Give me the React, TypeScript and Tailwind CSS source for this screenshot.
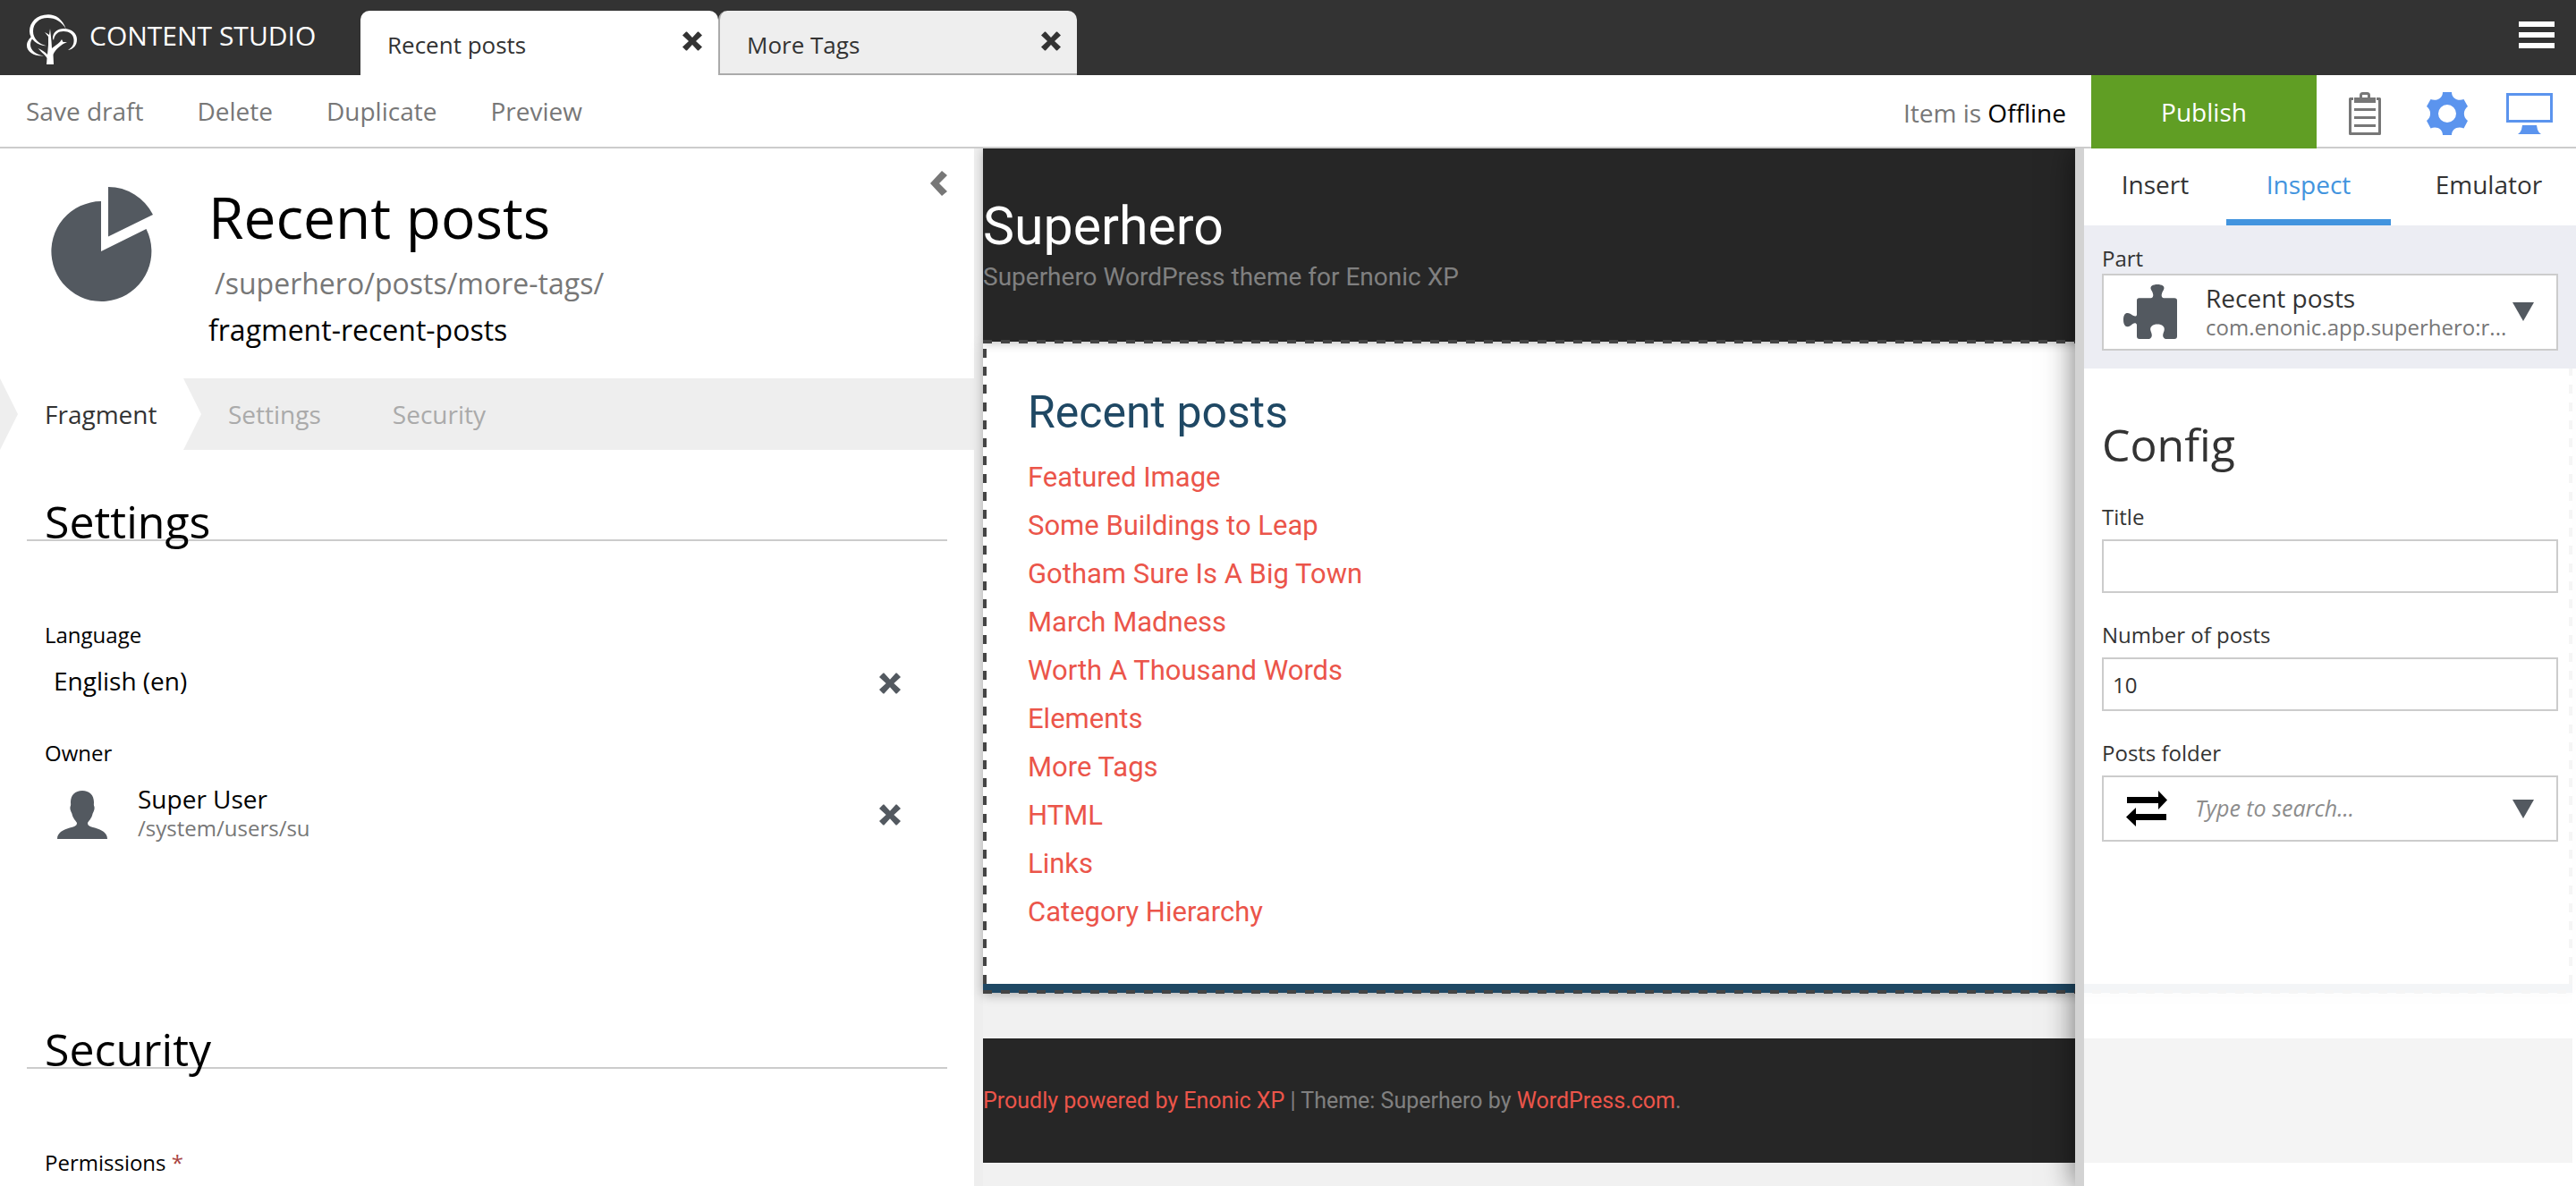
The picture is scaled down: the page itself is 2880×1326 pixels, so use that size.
import { useState, type ReactNode } from "react";

const POSTS = [
  "Featured Image",
  "Some Buildings to Leap",
  "Gotham Sure Is A Big Town",
  "March Madness",
  "Worth A Thousand Words",
  "Elements",
  "More Tags",
  "HTML",
  "Links",
  "Category Hierarchy",
];

function Logo() {
  return (
    <svg viewBox="0 0 56 56" className="h-14 w-14 shrink-0" fill="currentColor" aria-hidden="true">
      <path d="M44 17C40 5 32 .3 24 .3C11 .3 3 9 3 19c0 9 9 16 19 16.300C13 33 7 27 7 19C7 10 14 4 23 4c9 0 16 4 21 13z" />
      <path d="M29 27c0-7 5-11 12.500-11C50 16 56 21 56 28c0 7-4 11-10 12c5-3 7-7 6.500-12C52 22 47 19 41 19s-10 3-11 10z" />
      <path d="M5 25C1 29 0 32 0 35c0 7 8 12 19 11.500C10 45 4 40 4 34c0-3 1-6 3-7z" />
      <path d="M22 56l.5-7C21 46 17 43 12.500 38c4.500 2 8 4 10.500 7l1-11v-9l-4-5c2 1 3.500 2 5 3l1-7l1.500 14l.5 8c5-4 9-6 11-10l1.500 3H45c-7 3-13 8-15.500 14L30 56z" />
    </svg>
  );
}

function Cross({ className }: { className: string }) {
  return (
    <svg viewBox="0 0 22 22" className={className} fill="currentColor" aria-hidden="true">
      <path d="M4 0.500L5 .5L11 7L17 .5L18 .5L22 4.500L15 11L22 17.500L18 21.500L17 21.500L11 15L5 21.500L4 21.500L0 17.500L7 11L0 4.500z" />
    </svg>
  );
}

function PieIcon() {
  return (
    <svg viewBox="0 0 114 128" className="mt-[18px] h-32 w-[114px] shrink-0 text-[#535960]" fill="currentColor" aria-hidden="true">
      <path d="M56 16A56 56 0 1 0 106.500 47L56 72z" />
      <path d="M64 0V55.500L114 31A56 56 0 0 0 64 0z" />
    </svg>
  );
}

function ClipboardIcon() {
  return (
    <svg viewBox="0 0 36 48" className="h-12 w-9" aria-hidden="true">
      <path d="M5 7.500H1.500V46.500H34.500V7.500H31" fill="none" stroke="#777" strokeWidth="3" strokeLinejoin="round" />
      <path d="M13.500 7V3.500Q13.500 1.500 15.500 1.500H20.500Q22.500 1.500 22.500 3.500V7" fill="none" stroke="#777" strokeWidth="3" />
      <path d="M6 6H30V12H6zM6 18H30V21H6zM6 27H30V30H6zM6 36H30V39H6z" fill="#777" />
    </svg>
  );
}

function GearIcon() {
  return (
    <svg viewBox="0 0 46 48" className="h-12 w-[46px]" fill="#5b94ee" aria-hidden="true">
      <path
        fillRule="evenodd"
        d="M18 0H28C28 7 35 10.500 41.500 8L46 16C40.500 20 40.500 28 46 32L41.500 40.500C35 37.500 28 41 28 48H18C18 41 11 37.500 4.500 40.500L0 32C5.500 28 5.500 20 0 16L4.500 8C11 10.500 18 7 18 0zM23 14A10 10 0 1 0 23 34A10 10 0 1 0 23 14z"
      />
    </svg>
  );
}

function MonitorIcon() {
  return (
    <svg viewBox="0 0 52 46" className="h-[46px] w-[52px]" fill="#5b94ee" aria-hidden="true">
      <path fillRule="evenodd" d="M0 0H52V33H0zM3 3V30H49V3z" />
      <path d="M18 36H34L35 41Q36 44 39 46H13Q16 44 17 41z" />
    </svg>
  );
}

function PuzzleIcon() {
  return (
    <svg viewBox="0 0 60 61" className="h-[61px] w-[60px] shrink-0" fill="#535960" aria-hidden="true">
      <path d="M17.500 15.300H31C35 14 33 9 31 6C29 2 33 0 38 0C43 0 47 2 45 6C43 9 41 14 45 15.300H57Q60 15.300 60 18V58Q60 61 57 61H47C43 59 44 56 45.500 52C47 47 43 44.500 38 44.500C33 44.500 29 47 30.500 52C32 56 33 59 29 61H18Q15 61 15 58V45C14 42 11 43 8 46C3 49 0 46 0 39.500C0 33 3 30.500 8 33C11 35 14 37 15 34V18Q15 15.300 17.500 15.300z" />
    </svg>
  );
}

function UserIcon() {
  return (
    <svg viewBox="0 0 56 54" className="mt-1.5 h-[54px] w-14 shrink-0" fill="#535960" aria-hidden="true">
      <path d="M28 0C36 0 41 5 41 13C41 15 40.500 16 41.500 18C42 22 40 24 39.500 26C38.500 31 35 34 34 36C34 39 36 40 42 41.500C50 44 56 47 56 54H0C0 47 6 44 14 41.500C20 40 22 39 22 36C21 34 17.500 31 16.500 26C16 24 14 22 14.500 18C15.500 16 15 15 15 13C15 5 20 0 28 0z" />
    </svg>
  );
}

function SwapIcon() {
  return (
    <svg viewBox="0 0 46 40" className="h-10 w-[46px] shrink-0" fill="#000" aria-hidden="true">
      <path d="M1 7H36V0L46 10.500L36 21V14H1zM45 26H11V19L0 29.500L11 40V33H45z" />
    </svg>
  );
}

function DownArrow() {
  return (
    <svg viewBox="0 0 24 21" className="h-[21px] w-6 shrink-0" fill="#535960" aria-hidden="true">
      <path d="M0 0H24L12 21z" />
    </svg>
  );
}

function SectionTitle({ children, className }: { children: ReactNode; className: string }) {
  return (
    <h2 className={"mx-[30px] border-b-2 border-[#ccc] pl-5 text-[50px] leading-10 " + className}>
      {children}
    </h2>
  );
}

function RemoveButton({ label }: { label: string }) {
  return (
    <button type="button" aria-label={label} className="mt-1.5 ml-auto mr-[82px] text-[#535960]">
      <Cross className="h-6 w-6" />
    </button>
  );
}

function Header() {
  return (
    <header className="flex h-[84px] bg-[#333] text-white">
      <a href="#home" className="flex w-[403px] shrink-0 items-center gap-3.5 pl-[30px]">
        <span className="pt-1">
          <Logo />
        </span>
        <span className="pb-1 text-[30px] leading-10 whitespace-nowrap">CONTENT STUDIO</span>
      </a>
      <nav className="flex items-end text-[26px] text-[#333]">
        <div className="flex h-[72px] w-[400px] items-center justify-between rounded-t-[10px] bg-white pr-[18px] pl-[30px]">
          <a href="#recent-posts" className="pt-1">Recent posts</a>
          <button type="button" aria-label="Close Recent posts" className="pb-1">
            <Cross className="h-[22px] w-[22px]" />
          </button>
        </div>
        <div className="flex h-[72px] w-[401px] items-center justify-between rounded-t-[10px] border-b-2 border-l-2 border-[#aaa] bg-[#eee] pr-[18px] pl-[30px]">
          <a href="#more-tags" className="pt-1.5">More Tags</a>
          <button type="button" aria-label="Close More Tags" className="pb-0.5">
            <Cross className="h-[22px] w-[22px]" />
          </button>
        </div>
      </nav>
      <button type="button" aria-label="Menu" className="mr-6 mb-1.5 ml-auto flex flex-col justify-center gap-1.5">
        <span className="h-1.5 w-10 bg-white" />
        <span className="h-1.5 w-10 bg-white" />
        <span className="h-1.5 w-10 bg-white" />
      </button>
    </header>
  );
}

function Toolbar() {
  return (
    <div className="flex h-[82px] border-b-2 border-[#ccc] text-[28px] text-[#777]">
      <div className="flex items-center gap-[60px] pl-[29px]">
        <button type="button">Save draft</button>
        <button type="button">Delete</button>
        <button type="button">Duplicate</button>
        <button type="button">Preview</button>
      </div>
      <p className="mr-7 ml-auto self-center pt-1">
        Item is <span className="text-black">Offline</span>
      </p>
      <button type="button" className="-mb-0.5 w-[252px] bg-[#609e24] text-white">
        Publish
      </button>
      <div className="flex pt-1.5 pr-1.5 pl-2">
        <button type="button" aria-label="Show tasks" className="flex w-[92px] items-center justify-center">
          <ClipboardIcon />
        </button>
        <button type="button" aria-label="Show inspection panel" className="flex w-[92px] items-center justify-center">
          <GearIcon />
        </button>
        <button type="button" aria-label="Show page editor" className="flex w-[92px] items-center justify-center">
          <MonitorIcon />
        </button>
      </div>
    </div>
  );
}

function FormPanel() {
  const [title, setTitle] = useState("Recent posts");
  const [name, setName] = useState("fragment-recent-posts");
  return (
    <section className="w-[37.8125%] shrink-0 bg-white text-black">
      <div className="flex pt-[25px] pr-[30px] pb-[30px] pl-[57px]">
        <PieIcon />
        <div className="mt-3 ml-[62px] min-w-0 flex-1">
          <input
            aria-label="Display name"
            value={title}
            onChange={(e) => setTitle(e.target.value)}
            className="block h-20 w-full text-[64px] leading-[80px] outline-none"
          />
          <p className="mt-2.5 pl-[7px] text-[32px] leading-[48px] text-[#777]">/superhero/posts/more-tags/</p>
          <input
            aria-label="Name"
            value={name}
            onChange={(e) => setName(e.target.value)}
            className="mt-1 block h-12 w-full text-[32px] leading-[48px] outline-none"
          />
        </div>
        <button type="button" aria-label="Collapse panel" className="self-start text-[#777]">
          <svg viewBox="0 0 19 28" className="h-7 w-[19px]" fill="currentColor" aria-hidden="true">
            <path d="M13 0L19 5L10 14L19 23L13 28L0 14z" />
          </svg>
        </button>
      </div>

      <nav className="flex h-20 bg-[#eee] text-[28px] text-[#aaa]">
        <a
          href="#fragment"
          className="flex w-[225px] items-center bg-white pl-[50px] text-[#333] [clip-path:polygon(0_0,205px_0,100%_50%,205px_100%,0_100%,20px_50%)]"
        >
          Fragment
        </a>
        <a href="#settings" className="ml-[30px] flex items-center">Settings</a>
        <a href="#security" className="ml-20 flex items-center">Security</a>
      </nav>

      <SectionTitle className="mt-[60px]">Settings</SectionTitle>
      <h3 className="mt-[89px] pl-[50px] text-2xl leading-8">Language</h3>
      <div className="mt-[19px] flex h-8 items-center pl-[60px]">
        <span className="text-[28px] leading-10">English (en)</span>
        <RemoveButton label="Remove language" />
      </div>
      <h3 className="mt-[49px] pl-[50px] text-2xl leading-8">Owner</h3>
      <div className="mt-[17px] flex items-center pl-16">
        <UserIcon />
        <div className="ml-[34px]">
          <p className="text-[28px] leading-9">Super User</p>
          <p className="text-2xl leading-[30px] text-[#777]">/system/users/su</p>
        </div>
        <RemoveButton label="Remove owner" />
      </div>

      <SectionTitle className="mt-[212px]">Security</SectionTitle>
      <h3 className="mt-[89px] pl-[50px] text-2xl leading-8">
        Permissions <span className="text-[#a94442]">*</span>
      </h3>
    </section>
  );
}

function SitePreview() {
  return (
    <main className="mr-1 min-w-0 flex-1 bg-[#f1f1f1] font-[Roboto,sans-serif] text-[#808080]">
      <header className="relative z-10 h-[216px] bg-[#262626] pt-[51px] shadow-[0_2px_10px_rgba(0,0,0,0.25)]">
        <h1 className="text-[59px] leading-[72px] text-white">Superhero</h1>
        <p className="mt-px text-[28px] leading-10">Superhero WordPress theme for Enonic XP</p>
      </header>
      <article className="relative border-b-[10px] border-[#1f4864] bg-white pt-[43px] pb-[53px] pl-[50px] shadow-[0_2px_12px_rgba(0,0,0,0.3)]">
        <h2 className="text-[50px] leading-[72px] text-[#1f4864]">Recent posts</h2>
        <ul className="mt-2.5 text-[31px] leading-[54px] text-[#eb554a]">
          {POSTS.map((post) => (
            <li key={post}>
              <a href="#post">{post}</a>
            </li>
          ))}
        </ul>
        {/* Dashed selection frame round the component */}
        <span className="absolute inset-x-0 -top-0.5 z-20 h-1 bg-[repeating-linear-gradient(90deg,#444_0_10px,transparent_10px_20px)]" />
        <span className="absolute inset-x-0 -bottom-[11px] h-1 bg-[repeating-linear-gradient(90deg,#444_0_10px,transparent_10px_20px)]" />
        <span className="absolute top-2 bottom-0 left-0 w-1 bg-[repeating-linear-gradient(180deg,#444_0_10px,transparent_10px_20px)]" />
        <span className="absolute top-2 right-0 bottom-0 w-1 bg-[repeating-linear-gradient(180deg,#444_0_10px,transparent_10px_20px)]" />
      </article>
      <footer className="mt-[51px] flex h-[139px] items-center bg-[#262626] text-[25px]">
        <p>
          <a href="#enonic" className="text-[#eb554a]">Proudly powered by Enonic XP</a> | Theme: Superhero by{" "}
          <a href="#wordpress" className="text-[#eb554a]">WordPress.com</a>.
        </p>
      </footer>
    </main>
  );
}

function InspectPanel() {
  const [title, setTitle] = useState("");
  const [count, setCount] = useState("10");
  return (
    <aside className="absolute inset-y-0 right-0 z-30 flex w-[560px] flex-col border-l-10 border-[#d3d3d3] text-[#333] shadow-[0_0_32px_rgba(0,0,0,0.55)]">
      <div role="tablist" className="flex h-[86px] bg-white text-[28px]">
        <button role="tab" type="button" aria-selected="false" className="w-[159px] border-b-[7px] border-transparent">
          Insert
        </button>
        <button role="tab" type="button" aria-selected="true" className="w-[184px] border-b-[7px] border-[#4294de] text-[#4294de]">
          Inspect
        </button>
        <button role="tab" type="button" aria-selected="false" className="flex-1 border-b-[7px] border-transparent pl-3">
          Emulator
        </button>
      </div>
      <div className="bg-[#ecedf3] px-5 pt-[21px] pb-5">
        <p id="part-label" className="text-2xl leading-8">Part</p>
        <button
          type="button"
          aria-haspopup="listbox"
          aria-labelledby="part-label"
          className="mt-px flex h-[86px] w-full items-center border-2 border-[#ccc] bg-white pr-[25px] pb-0.5 pl-[22px] text-left"
        >
          <PuzzleIcon />
          <span className="ml-8 min-w-0 flex-1">
            <span className="block text-[28px] leading-9">Recent posts</span>
            <span className="block text-2xl leading-[30px] whitespace-nowrap text-[#777]">com.enonic.app.superhero:r...</span>
          </span>
          <DownArrow />
        </button>
      </div>
      <div className="flex-1 bg-white/95 bg-clip-padding px-5 pt-[55px]">
        <h2 className="text-[50px] leading-[60px]">Config</h2>
        <label htmlFor="title" className="mt-[35px] block text-2xl leading-8">Title</label>
        <input
          id="title"
          value={title}
          onChange={(e) => setTitle(e.target.value)}
          className="mt-[9px] block h-[60px] w-full border-2 border-[#ccc] bg-white px-2.5 text-2xl"
        />
        <label htmlFor="count" className="mt-[31px] block text-2xl leading-8">Number of posts</label>
        <input
          id="count"
          value={count}
          onChange={(e) => setCount(e.target.value)}
          className="mt-[9px] block h-[60px] w-full border-2 border-[#ccc] bg-white px-2.5 text-2xl"
        />
        <label htmlFor="folder" className="mt-[31px] block text-2xl leading-8">Posts folder</label>
        <div className="mt-[9px] flex h-[74px] items-center border-2 border-[#ccc] bg-white pr-[25px] pl-[25px]">
          <SwapIcon />
          <input
            id="folder"
            placeholder="Type to search..."
            className="ml-[31px] min-w-0 flex-1 text-[25px] italic outline-none placeholder:text-[#8c8c8c]"
          />
          <DownArrow />
        </div>
      </div>
    </aside>
  );
}

export default function App() {
  return (
    <div className="flex min-h-screen flex-col bg-white font-['Open_Sans',sans-serif]">
      <Header />
      <Toolbar />
      <div className="relative flex flex-1 overflow-hidden">
        <FormPanel />
        <div className="w-2.5 shrink-0 bg-[#eee]" />
        <SitePreview />
        <InspectPanel />
      </div>
    </div>
  );
}
